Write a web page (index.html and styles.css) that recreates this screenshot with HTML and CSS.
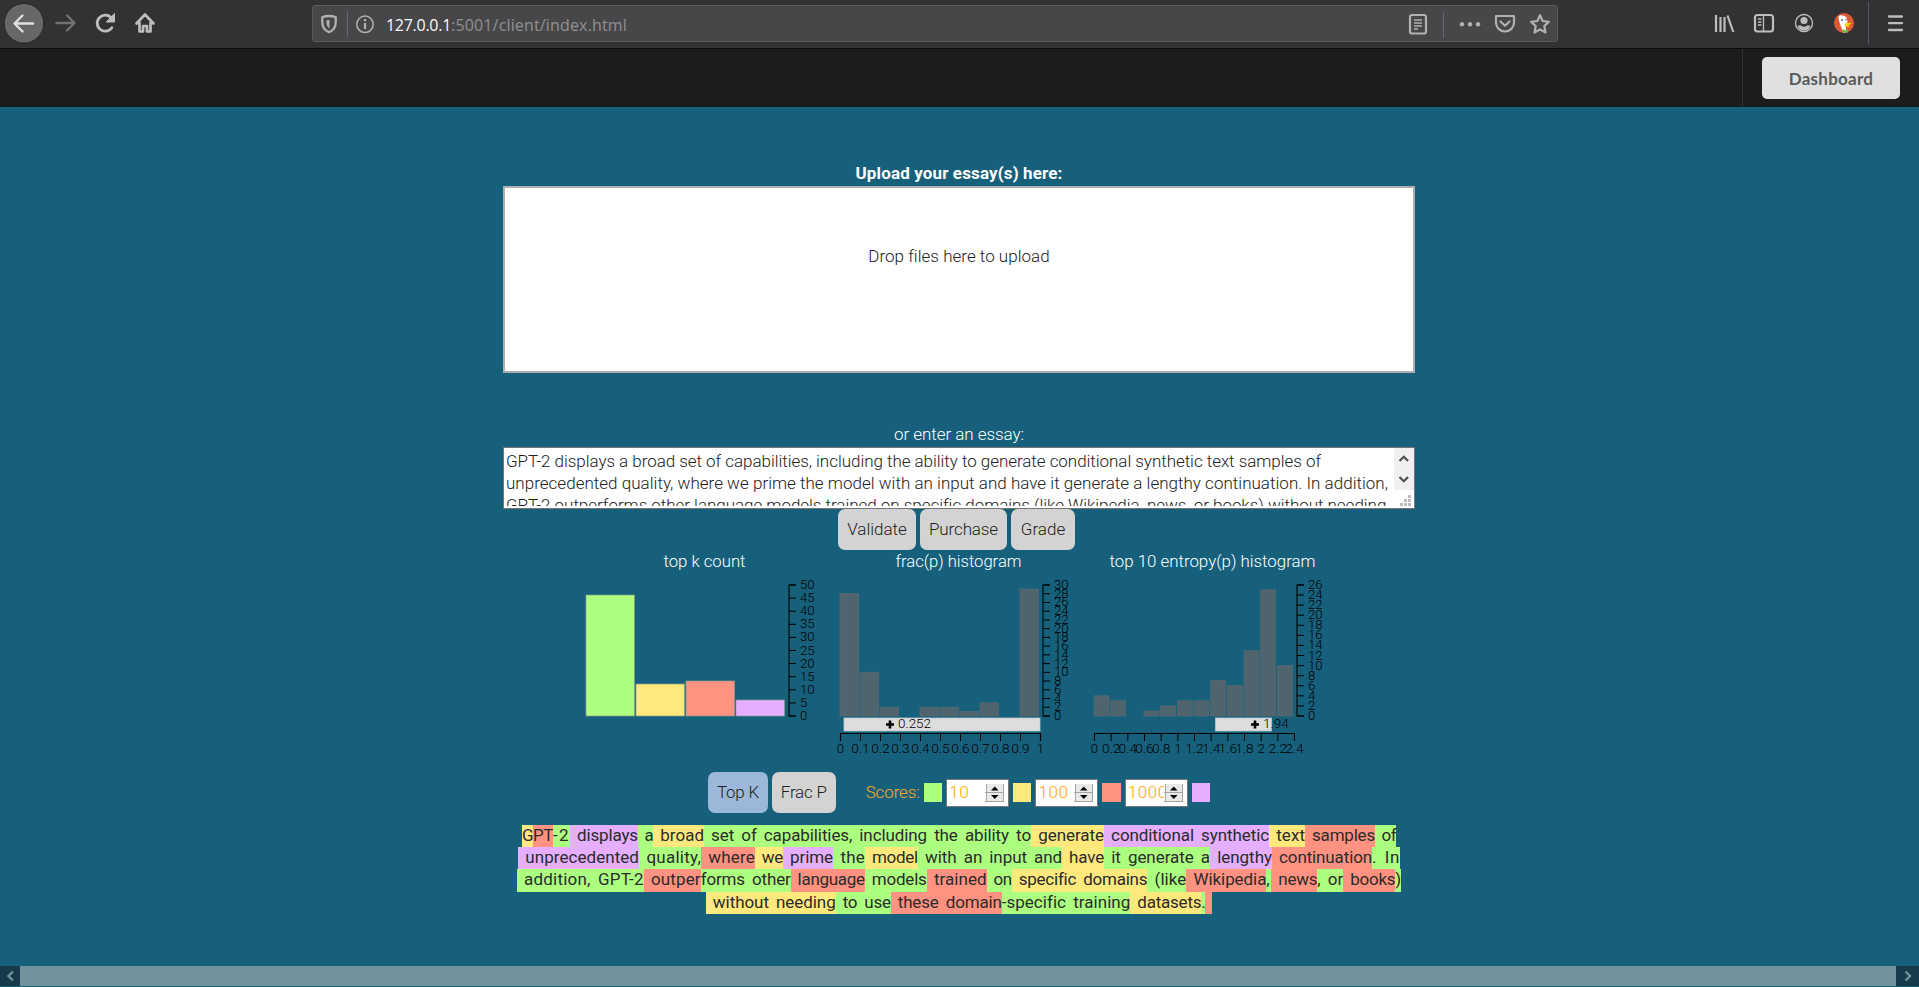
FILE: index.html
```html
<!DOCTYPE html>
<html lang="en">
<head>
<meta charset="utf-8">
<title>Essay grader</title>
<link rel="stylesheet" href="styles.css">
</head>
<body>
<header class="browser">
  <div class="nav-buttons">
    <svg width="160" height="48" viewBox="0 0 160 48" fill="none" stroke="#bdbdbf" stroke-width="2.4" stroke-linecap="round" stroke-linejoin="round">
      <circle cx="24" cy="23.3" r="19.8" fill="#676769" stroke="#29292b" stroke-width="1"/>
      <path d="M33 23.500H15M22.500 15.500l-8 8 8 8" stroke="#e0e0e1"/>
      <path d="M56.500 23H74M67 15.500l7.500 7.500-7.500 7.500" stroke="#717173"/>
      <path d="M111.500 18.200a8 8 0 1 0 .3 9.500" stroke-width="2.8"/>
      <path d="M114.500 14v8h-8z" fill="#bdbdbf" stroke-width="1"/>
      <path d="M136.500 23.500L145 14.500l8.500 9M139.500 22v9.500h3.500v-5.500h4v5.500h3.500V22" stroke-width="2.700"/>
    </svg>
  </div>
  <div class="urlbar">
    <svg class="url-left" width="75" height="36" viewBox="312 5 75 36" fill="none" stroke="#b1b1b3" stroke-width="2">
      <path d="M330 15c3 0 5 .5 6.700 1.300v5.200c0 4.500-2.500 8-6.700 9.800-4.200-1.800-6.700-5.300-6.700-9.800v-5.200c1.700-.8 3.700-1.300 6.700-1.300z" stroke-width="2.300"/>
      <path d="M330.500 19v8.500c-2-1.300-3-3.200-3-5.700v-2.500z" fill="#b1b1b3" stroke="none"/>
      <path d="M348.500 10v26" stroke="#68686c" stroke-width="1"/>
      <circle cx="366" cy="23.300" r="8.200" stroke-width="1.500"/>
      <path d="M366 22v6M366 18v2.200" stroke-width="2.200"/>
    </svg>
    <div class="url"><span class="host fit" data-w="65">127.0.0.1</span><span class="fit" data-w="176">:5001/client/index.html</span></div>
    <svg width="155" height="36" viewBox="1402 5 155 36" fill="none" stroke="#b1b1b3" stroke-width="2.200" stroke-linejoin="round">
      <rect x="1410" y="14" width="16" height="18.500" rx="2"/>
      <path d="M1414 19h8M1414 22h8M1414 25h8M1414 28h4" stroke-width="1.300"/>
      <path d="M1443.500 11v26" stroke="#68686c" stroke-width="1"/>
      <g fill="#b1b1b3" stroke="none"><circle cx="1462" cy="23.200" r="2.200"/><circle cx="1470" cy="23.200" r="2.200"/><circle cx="1478" cy="23.200" r="2.200"/></g>
      <path d="M1496 15h18v6.500a9 9 0 0 1-18 0zM1500.500 20.500l4.500 4.300 4.500-4.300" stroke-linecap="round"/>
      <path d="M1540 14.200l2.700 5.800 6.200.8-4.600 4.300 1.200 6.400-5.500-3.100-5.500 3.100 1.200-6.400-4.600-4.300 6.200-.8z"/>
    </svg>
  </div>
  <div class="tools">
    <svg width="215" height="48" viewBox="1704 0 215 48" fill="none" stroke="#bdbdbf" stroke-width="2">
      <path d="M1716 15v17M1720.500 17v15M1724.500 17v15M1727.500 15.500l5.800 16.500" stroke-width="2.200"/>
      <rect x="1755" y="15" width="18" height="16.500" rx="2.500" stroke-width="2.200"/>
      <path d="M1763.500 15v16M1758 19h3.500M1758 22h3.500M1758 25h3.500" stroke-width="1.300"/>
      <circle cx="1804" cy="23" r="8.500" stroke-width="1.400"/><circle cx="1804" cy="20.500" r="3.600" fill="#bdbdbf" stroke="none"/><path d="M1797.800 26c1.500-1 3-1 3.700 0 1.200 1 3.800 1 5 0 .7-1 2.200-1 3.700 0-1.500 6-11 6-12.400 0z" fill="#bdbdbf" stroke="none"/>
      <circle cx="1844" cy="23" r="10" fill="#de5833" stroke="none"/>
      <path d="M1838.500 17c0-1.500 2-2 3-1.500 2.500-.5 5 1 5.500 3.500l.5 4-2 2.500 1 6.500c-1.500.6-2.500.5-3.500.2-1-4-4-9-4.500-15.200z" fill="#fff" stroke="none"/>
      <circle cx="1842" cy="20" r=".9" fill="#2d4f8e" stroke="none"/><circle cx="1846" cy="19.500" r=".7" fill="#2d4f8e" stroke="none"/>
      <path d="M1845 23.500c3-1 5-1 6.500-.4-1 2.200-4 2.500-4 2.500 1.500.5 3 .4 3 .4-1.500 1.500-5 1-6-.5z" fill="#fdd20a" stroke="none"/>
      <path d="M1842.500 29l2.500 1.300 3-1.300v4l-3-1.200-2.500 1.200z" fill="#65bc46" stroke="none"/>
      <path d="M1868.500 2v42" stroke="#5a5a5e" stroke-width="1"/>
      <path d="M1889 16.500h13M1889 23.200h13M1889 30h13" stroke-width="2.300" stroke-linecap="round"/>
    </svg>
  </div>
</header>
<nav class="menu"><div class="menu-item"><button class="dash"><span class="fit" data-w="84.500">Dashboard</span></button></div></nav>
<main>
  <div class="label bold"><span class="fit" data-w="207">Upload your essay(s) here:</span></div>
  <div class="dropzone"><span class="fit" data-w="181">Drop files here to upload</span></div>
  <div class="label enter"><span class="fit" data-w="130">or enter an essay:</span></div>
  <div class="essay">
    <div class="essay-text">
      <div><span class="fit" data-w="815">GPT-2 displays a broad set of capabilities, including the ability to generate conditional synthetic text samples of</span></div>
      <div><span class="fit" data-w="882">unprecedented quality, where we prime the model with an input and have it generate a lengthy continuation. In addition,</span></div>
      <div><span class="fit" data-w="880">GPT-2 outperforms other language models trained on specific domains (like Wikipedia, news, or books) without needing</span></div>
    </div>
    <div class="essay-side">
      <svg width="20" height="42" viewBox="0 0 20 42" fill="none" stroke="#505050" stroke-width="2.200"><rect width="20" height="42" fill="#f0f0f0" stroke="none"/><path d="M5.500 13l4.300-4.300L14.100 13M5.500 29l4.300 4.300 4.300-4.300"/></svg>
      <svg width="20" height="18" viewBox="0 0 20 18" fill="#bdbdbd"><path d="M14 5h3v3h-3zM10 9h3v3h-3zM14 9h3v3h-3zM6 13h3v3H6zM10 13h3v3h-3zM14 13h3v3h-3z"/></svg>
    </div>
  </div>
  <div class="actions">
    <button class="btn validate"><span class="fit" data-w="59.500">Validate</span></button>
    <button class="btn purchase"><span class="fit" data-w="69">Purchase</span></button>
    <button class="btn grade"><span class="fit" data-w="44.500">Grade</span></button>
  </div>
  <svg class="charts" id="charts" width="780" height="212" viewBox="569.500 550 780 212"></svg>
  <div class="controls">
    <button class="btn topk active"><span class="fit" data-w="42">Top K</span></button>
    <button class="btn fracp"><span class="fit" data-w="46">Frac P</span></button>
    <span class="scores"><span class="fit" data-w="54">Scores:</span></span>
    <i class="swatch g"></i>
    <div class="num"><span class="fit" data-w="20">10</span><svg width="20" height="20" viewBox="0 0 20 20"><use href="#spin"/></svg></div>
    <i class="swatch y"></i>
    <div class="num"><span class="fit" data-w="30">100</span><svg width="20" height="20" viewBox="0 0 20 20"><use href="#spin"/></svg></div>
    <i class="swatch r"></i>
    <div class="num"><span class="fit" data-w="40">1000</span><svg width="20" height="20" viewBox="0 0 20 20"><use href="#spin"/></svg></div>
    <i class="swatch p"></i>
  </div>
  <svg class="defs" width="0" height="0"><symbol id="spin" viewBox="0 0 20 20"><rect width="20" height="20" fill="#fff"/><rect x="1" y="1" width="18" height="18" fill="#e9e9e9"/><path d="M1.500 1v18M0 18.500h19M0 9.500h19M18.500 1v18" stroke="#a5a5a5"/><path d="M6 7.500h7.500L9.800 3.500zM6 12h7.500L9.800 16z" fill="#000"/></symbol></svg>
  <div class="tokens">
    <div class="row"><span class="y fit" data-w="11">G</span><span class="r fit" data-w="20">PT</span><span class="g fit" data-w="17">-2</span><span class="p fit" data-w="68"> displays</span><span class="g fit" data-w="15"> a</span><span class="y fit" data-w="51"> broad</span><span class="g fit" data-w="327"> set of capabilities, including the ability to</span><span class="y fit" data-w="73"> generate</span><span class="p fit" data-w="165"> conditional synthetic</span><span class="y fit" data-w="36"> text</span><span class="r fit" data-w="70"> samples</span><span class="g fit" data-w="21"> of</span></div>
    <div class="row"><span class="p fit" data-w="121"> unprecedented</span><span class="g fit" data-w="62"> quality,</span><span class="r fit" data-w="54"> where</span><span class="y fit" data-w="28"> we</span><span class="p fit" data-w="50"> prime</span><span class="g fit" data-w="32"> the</span><span class="y fit" data-w="53"> model</span><span class="g fit" data-w="144"> with an input and</span><span class="y fit" data-w="42"> have</span><span class="g fit" data-w="106"> it generate a</span><span class="p fit" data-w="62"> lengthy</span><span class="r fit" data-w="100"> continuation</span><span class="g fit" data-w="28">. In</span></div>
    <div class="row tall"><span class="g fit" data-w="127"> addition, GPT-2</span><span class="r fit" data-w="57"> outper</span><span class="g fit" data-w="90">forms other</span><span class="r fit" data-w="74"> language</span><span class="g fit" data-w="62"> models</span><span class="r fit" data-w="60"> trained</span><span class="g fit" data-w="25"> on</span><span class="y fit" data-w="135"> specific domains</span><span class="g fit" data-w="39"> (like</span><span class="r fit" data-w="80"> Wikipedia</span><span class="g fit" data-w="5">,</span><span class="r fit" data-w="46"> news</span><span class="g fit" data-w="26">, or</span><span class="r fit" data-w="52"> books</span><span class="g fit" data-w="6">)</span></div>
    <div class="row"><span class="y fit" data-w="130"> without needing</span><span class="g fit" data-w="55"> to use</span><span class="r fit" data-w="111"> these domain</span><span class="g fit" data-w="128">-specific training</span><span class="y fit" data-w="71"> datasets</span><span class="g fit" data-w="4">.</span><span class="r fit" data-w="7"> </span></div>
  </div>
</main>
<footer class="hscroll">
  <svg width="20" height="20" viewBox="0 0 20 20" fill="none" stroke="#71919c" stroke-width="2.400"><path d="M13 5.500l-4.500 4.500 4.500 4.500"/></svg>
  <div class="thumb"></div>
  <svg width="21" height="20" viewBox="0 0 21 20" fill="none" stroke="#71919c" stroke-width="2.400"><path d="M7.500 5.500l4.500 4.500-4.500 4.500"/></svg>
</footer>
<script src="app.js"></script>
</body>
</html>
```
FILE: styles.css
```css
* { box-sizing: border-box; }
body { margin: 0; width: 1919px; height: 987px; overflow: hidden; background: #17607c; font-family: Roboto, "Noto Sans", sans-serif; font-weight: 300; font-size: 17px; color: #222; display: flex; flex-direction: column; }
svg { display: block; flex: none; }
button { border: 0; padding: 0; font: inherit; color: inherit; }
.fit { display: inline-block; white-space: pre; flex: none; }
.browser { height: 49px; flex: none; background: #323234; border-bottom: 1px solid #0c0c0d; display: flex; justify-content: space-between; }
.nav-buttons { width: 312px; }
.urlbar { width: 1246px; height: 37px; margin-top: 5px; margin-right: 146px; background: #474749; border: 1px solid #5a5a5d; border-radius: 3px; display: flex; align-items: center; overflow: hidden; }
.url-left { margin-left: -2px; }
.url { flex: 1; color: #909092; font-family: "Open Sans", sans-serif; font-weight: 400; font-size: 16px; line-height: 24px; padding-top: 2px; white-space: nowrap; }
.host { color: #f9f9fa; }
.menu { height: 58px; flex: none; background: #1b1c1d; display: flex; justify-content: flex-end; }
.menu-item { width: 177px; border-left: 1px solid #303132; padding: 8px 19px; }
.dash { width: 138px; height: 42px; background: #e0e0e0; border-radius: 5px; color: #5a5a5a; font: 700 17px/39px Lato, sans-serif; }
main { flex: 1; width: 1918px; display: flex; flex-direction: column; align-items: center; padding-top: 55px; }
.label { color: #fff; height: 24px; line-height: 23px; font-weight: 300; }
.bold { font-family: Roboto, sans-serif; font-weight: 700; }
.dropzone { width: 912px; height: 187px; background: #fff; border: 2px solid #aeaeae; text-align: center; padding-top: 57px; line-height: 23px; }
.enter { margin-top: 50px; }
.essay { width: 912px; height: 62px; background: #fff; border: 1px solid #767676; display: flex; justify-content: space-between; }
.essay-text { height: 58px; overflow: hidden; padding: 2px 0 0 2px; line-height: 22px; }
.essay-text div { height: 22px; }
.actions { display: flex; gap: 4px; margin-right: 5px; height: 41px; }
.btn { height: 41px; background: #d3d3d3; border-radius: 7px; line-height: 39px; }
.validate { width: 78px; }
.purchase { width: 87px; }
.grade { width: 64px; }
.charts text { font-size: 13px; font-weight: 300; fill: #000; }
.charts .title { font-size: 17px; fill: #fff; }
.controls { margin-top: 10px; height: 41px; width: 502px; display: flex; align-items: center; gap: 4px; line-height: 23px; }
.topk { width: 60px; }
.active { background: #9bb8da; }
.fracp { width: 64px; }
.scores { color: #ffa726; margin-left: 26px; }
.swatch { width: 18.500px; height: 19px; }
.g { background: #adff80; }
.y { background: #ffe97c; }
.r { background: #ff9280; }
.p { background: #e5aeff; }
.num { width: 63px; height: 28px; border: 1px solid #767676; background: #fff; color: #ffa500; display: flex; align-items: center; padding: 0 2px; position: relative; }
.num svg { position: absolute; right: 3px; top: 3px; }
.defs { position: absolute; }
.tokens { margin-top: 12px; font-weight: 400; color: #2b2b2b; }
.row { display: flex; justify-content: center; height: 22px; line-height: 21px; word-spacing: 3px; }
.row.tall { height: 23px; }
.row span { height: 100%; }
.hscroll { height: 20px; margin-bottom: 1px; flex: none; display: flex; background: #173b4b; }
.thumb { flex: 1; background: #71919c; margin-right: 2px; }
```
FILE: app.js
```js
// Draw the three distribution charts.
const out = [];
const base = 716;
const text = (x, y, s, w, anchor, cls) => {
  out.push(`<text x="${x}" y="${y}" text-anchor="${anchor || 'start'}" class="${cls || ''}" textLength="${w}" lengthAdjust="spacingAndGlyphs">${s}</text>`);
};
const labelWidth = s => [...String(s)].reduce((n, c) => n + (c === '.' ? 3.8 : 7.3), 0);
const bar = (x, w, h, fill, stroke) => {
  if (h) out.push(`<rect x="${x + .5}" y="${base - h}" width="${w}" height="${h}" fill="${fill}" stroke="${stroke}" stroke-width=".7"/>`);
};
const yAxis = (x, max, step) => {
  out.push(`<path d="M${x + 7} 585H${x}V716H${x + 7}" fill="none" stroke="#000" stroke-width="1.1"/>`);
  for (let v = 0; v <= max; v += step) {
    const y = base - v / max * 131;
    out.push(`<path d="M${x} ${y}h7" stroke="#000" stroke-width="1"/>`);
    text(x + 11, y + 4, v, labelWidth(v));
  }
};
const xAxis = (x, labels) => {
  const step = 200 / (labels.length - 1);
  out.push(`<path d="M${x} 740V733.500H${x + 200}V740" fill="none" stroke="#000" stroke-width="1.2"/>`);
  labels.forEach((v, i) => {
    out.push(`<path d="M${x + i * step} 734v7" stroke="#000" stroke-width="1"/>`);
    text(x + i * step, 752.5, v, labelWidth(v), 'middle');
  });
};
const range = (x, w, cx, label) => {
  out.push(`<rect x="${x}" y="718" width="${w}" height="13" fill="#ddd" stroke="#b9c9d0" stroke-width=".8"/>`);
  out.push(`<path d="M${cx - 4} 724.500h8M${cx} 720.500v8" stroke="#000" stroke-width="2.600"/>`);
  text(cx + 8, 728, label, labelWidth(label));
};
text(664, 566.5, 'top k count', 82, 'start', 'title');
text(896, 566.5, 'frac(p) histogram', 126, 'start', 'title');
text(1110, 566.5, 'top 10 entropy(p) histogram', 206, 'start', 'title');
[[121, '#adff80'], [32, '#ffe97c'], [35, '#ff9280'], [16, '#e5aeff']].forEach(([h, c], i) => bar(586 + i * 50, 48.5, h, c, '#8d9c88'));
yAxis(789.5, 50, 5);
[28, 10, 2, 0, 2, 2, 1, 3, 0, 29].forEach((v, i) => bar(840 + i * 20, 18.5, v * 4.38, '#4f646d', '#576b73'));
yAxis(1043.5, 30, 2);
range(844.5, 196, 890.5, '0.252');
xAxis(841, [0, .1, .2, .3, .4, .5, .6, .7, .8, .9, 1]);
[4, 3, 0, 1, 2, 3, 3, 7, 6, 13, 25, 10].forEach((v, i) => bar(1094 + i * 16.67, 15, v * 5.05, '#4f646d', '#576b73'));
yAxis(1297.5, 26, 2);
range(1216, 56, 1255.5, '1.94');
xAxis(1095, [0, .2, .4, .6, .8, 1, 1.2, 1.4, 1.6, 1.8, 2, 2.2, 2.4]);
document.getElementById('charts').innerHTML = out.join('');

document.querySelectorAll('.fit').forEach(el => {
  const target = parseFloat(el.dataset.w);
  const natural = el.getBoundingClientRect().width;
  el.style.letterSpacing = (target - natural) / el.textContent.length + 'px';
});
```
